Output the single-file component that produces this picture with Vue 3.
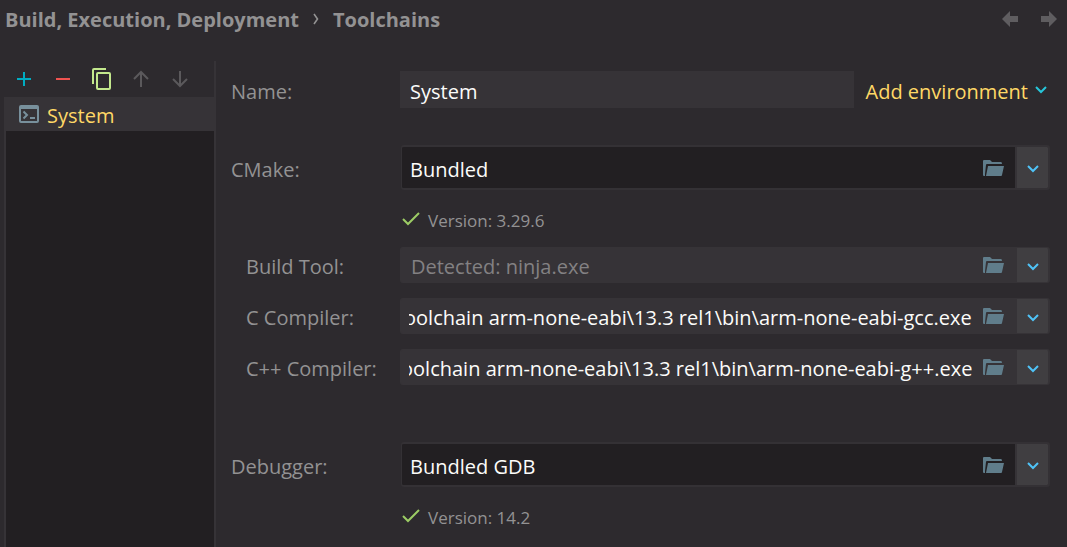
<script setup>
import { onMounted, ref } from 'vue';

const TOOLCHAIN_BIN = 'C:\\Program Files (x86)\\Arm GNU Toolchain arm-none-eabi\\13.3 rel1\\bin\\';

const name = ref('System');
const toolchains = ref(['System']);
const selected = ref('System');
const form = ref(null);

const fields = ref([
    { id: 'cmake', label: 'CMake:', value: 'Bundled', large: true, version: 'Version: 3.29.6' },
    { id: 'build-tool', label: 'Build Tool:', value: '', placeholder: 'Detected: ninja.exe', nested: true },
    { id: 'c-compiler', label: 'C Compiler:', value: TOOLCHAIN_BIN + 'arm-none-eabi-gcc.exe', nested: true },
    { id: 'cpp-compiler', label: 'C++ Compiler:', value: TOOLCHAIN_BIN + 'arm-none-eabi-g++.exe', nested: true },
    { id: 'debugger', label: 'Debugger:', value: 'Bundled GDB', large: true, version: 'Version: 14.2' },
]);

onMounted(() => {
    // keep the end of long paths visible
    form.value.querySelectorAll('.combo input').forEach((input) => {
        input.scrollLeft = input.scrollWidth;
    });
});
</script>

<template>
    <div class="settings">
        <header class="header">
            <nav class="breadcrumbs">
                <a href="#">Build, Execution, Deployment</a>
                <svg width="6" height="14" viewBox="0 0 6 14">
                    <path d="M1 1L4.500 6L1 11" fill="none" stroke="currentColor" stroke-width="1.6" />
                </svg>
                <span>Toolchains</span>
            </nav>
            <div class="history">
                <button type="button" aria-label="Back">
                    <svg width="16" height="16" viewBox="0 0 16 16">
                        <path d="M0 8L8 0V5H16V11H8V16Z" fill="currentColor" />
                    </svg>
                </button>
                <button type="button" aria-label="Forward">
                    <svg width="16" height="16" viewBox="0 0 16 16">
                        <path d="M16 8L8 0V5H0V11H8V16Z" fill="currentColor" />
                    </svg>
                </button>
            </div>
        </header>

        <div class="content">
            <aside class="sidebar">
                <div class="toolbar">
                    <button type="button" class="add" aria-label="Add">
                        <svg width="24" height="24" viewBox="0 0 24 24">
                            <path d="M5 12H19M12 5V19" fill="none" stroke="currentColor" stroke-width="2" />
                        </svg>
                    </button>
                    <button type="button" class="remove" aria-label="Remove">
                        <svg width="24" height="24" viewBox="0 0 24 24">
                            <path d="M5 12H19" fill="none" stroke="currentColor" stroke-width="2" />
                        </svg>
                    </button>
                    <button type="button" class="copy" aria-label="Copy">
                        <svg width="24" height="24" viewBox="0 0 24 24">
                            <path
                                d="M3 17V3Q3 2 4 2H16M8 6H19Q20 6 20 7V21Q20 22 19 22H8Q7 22 7 21V7Q7 6 8 6Z"
                                fill="none"
                                stroke="currentColor"
                                stroke-width="2"
                            />
                        </svg>
                    </button>
                    <button type="button" aria-label="Move up" disabled>
                        <svg width="24" height="24" viewBox="0 0 24 24">
                            <path d="M12 20V5M5 12L12 5L19 12" fill="none" stroke="currentColor" stroke-width="2" />
                        </svg>
                    </button>
                    <button type="button" aria-label="Move down" disabled>
                        <svg width="24" height="24" viewBox="0 0 24 24">
                            <path d="M12 4V19M5 12L12 19L19 12" fill="none" stroke="currentColor" stroke-width="2" />
                        </svg>
                    </button>
                </div>
                <div class="list">
                    <button
                        v-for="item in toolchains"
                        :key="item"
                        type="button"
                        class="item"
                        :class="{ active: item === selected }"
                        @click="selected = item"
                    >
                        <svg width="20" height="18" viewBox="0 0 20 18">
                            <path
                                d="M2 0H18Q20 0 20 2V16Q20 18 18 18H2Q0 18 0 16V2Q0 0 2 0ZM2 4V16H18V4Z"
                                fill="currentColor"
                                fill-rule="evenodd"
                            />
                            <path d="M4.500 6.500L8 10L4.500 13.500M11 13H16" fill="none" stroke="currentColor" stroke-width="2" />
                        </svg>
                        <span>{{ item }}</span>
                    </button>
                </div>
            </aside>

            <form ref="form" class="form" @submit.prevent>
                <div class="row name-row">
                    <label for="name">Name:</label>
                    <div class="name-field">
                        <input id="name" v-model="name" type="text" />
                        <button type="button" class="environment">
                            <span>Add environment</span>
                            <svg width="12" height="8" viewBox="0 0 12 8">
                                <path d="M1 1L6 6L11 1" fill="none" stroke="currentColor" stroke-width="2" />
                            </svg>
                        </button>
                    </div>
                </div>

                <template v-for="field in fields" :key="field.id">
                    <div class="row" :class="{ nested: field.nested, main: field.large }">
                        <label :for="field.id">{{ field.label }}</label>
                        <div class="combo" :class="{ large: field.large }">
                            <input :id="field.id" v-model="field.value" type="text" :placeholder="field.placeholder" />
                            <button type="button" class="browse" aria-label="Browse">
                                <svg width="22" height="16" viewBox="0 0 22 16">
                                    <path
                                        d="M0 1Q0 0 1 0H7L9 2H18Q19 2 19 4H4Q3 4 3 5L2 14V16H1Q0 16 0 15ZM5 6H21L19 15Q19 16 18 16H3Z"
                                        fill="currentColor"
                                    />
                                </svg>
                            </button>
                            <button type="button" class="arrow" aria-label="Show options">
                                <svg width="12" height="8" viewBox="0 0 12 8">
                                    <path d="M1 1L6 6L11 1" fill="none" stroke="currentColor" stroke-width="2" />
                                </svg>
                            </button>
                        </div>
                    </div>
                    <div v-if="field.version" class="version">
                        <svg width="18" height="14" viewBox="0 0 18 14">
                            <path d="M1 7L6 12L17 1" fill="none" stroke="currentColor" stroke-width="2" />
                        </svg>
                        <span>{{ field.version }}</span>
                    </div>
                </template>
            </form>
        </div>
    </div>
</template>

<style>
body {
    background: #2d2a2e;
}
</style>

<style scoped>
.settings {
    box-sizing: border-box;
    display: flex;
    flex-direction: column;
    min-height: 100vh;
    background: #2d2a2e;
    color: #939293;
    font-family: 'Open Sans', 'Noto Sans', sans-serif;
    font-size: 20px;
    line-height: 28px;
}
svg {
    display: block;
    flex: none;
}
button {
    display: flex;
    align-items: center;
    padding: 0;
    border: 0;
    background: none;
    color: inherit;
    font: inherit;
    cursor: pointer;
}
input {
    box-sizing: border-box;
    min-width: 0;
    padding: 4px 0 0;
    border: 0;
    outline: 0;
    background: none;
    color: #fcfcfa;
    font: inherit;
}
input::placeholder {
    color: #838183;
    opacity: 1;
}

.header {
    display: flex;
    align-items: center;
    justify-content: space-between;
    height: 38px;
    margin-bottom: 23px;
    padding: 0 10px 0 5px;
}
.breadcrumbs {
    display: flex;
    align-items: center;
    gap: 14px;
    padding-top: 2px;
    font-weight: 700;
}
.breadcrumbs a {
    color: inherit;
    text-decoration: none;
}
.history {
    display: flex;
    gap: 23px;
    color: #5f5d60;
}

.content {
    display: flex;
    flex: 1;
}
.sidebar {
    display: flex;
    flex: none;
    flex-direction: column;
    box-sizing: border-box;
    width: 212px;
    margin-left: 4px;
    border-right: 2px solid #363337;
}
.toolbar {
    display: flex;
    align-items: center;
    gap: 15px;
    height: 36px;
    padding-left: 8px;
}
.toolbar button:disabled {
    color: #5b595c;
    cursor: default;
}
.toolbar .add {
    color: #00acc1;
}
.toolbar .remove {
    color: #ef5350;
}
.toolbar .copy {
    color: #c3e88d;
}
.list {
    flex: 1;
    border-left: 2px solid #363337;
    background: #221f22;
}
.item {
    gap: 8px;
    width: 100%;
    height: 34px;
    padding-left: 13px;
}
.item span,
.environment span {
    padding-top: 4px;
}
.item.active {
    background: #363337;
    color: #ffd866;
}
.item svg {
    color: #78909c;
}

.form {
    flex: 1;
    min-width: 0;
    padding: 10px 17px 0 15px;
}
.row {
    display: grid;
    grid-template-columns: 169px minmax(0, 1fr);
    align-items: center;
}
.row label {
    padding-top: 4px;
}
.row.nested {
    margin-bottom: 15px;
}
.row.nested label {
    padding-left: 15px;
}
.row.nested + .row.main {
    margin-top: 57px;
}
.name-row {
    margin-bottom: 37px;
}
.name-field {
    display: flex;
    gap: 12px;
}
.name-field input {
    flex: 1;
    height: 37px;
    padding-left: 10px;
    background: #363337;
}
.environment {
    gap: 7px;
    padding-right: 3px;
    color: #ffd866;
}
.environment svg {
    color: #26c6da;
}

.combo {
    display: flex;
    box-sizing: border-box;
    height: 36px;
    overflow: hidden;
    border: 1px solid #363337;
    border-right-width: 2px;
    border-radius: 3px;
    background: #363337;
}
.combo input {
    flex: 1;
    margin-left: 8px;
}
.combo input::placeholder {
    text-indent: 2px;
}
.combo .browse {
    justify-content: center;
    width: 43px;
    color: #607d8b;
}
.combo .arrow {
    justify-content: center;
    width: 33px;
    padding-top: 3px;
    border-left: 2px solid #363337;
    background: #403e41;
    color: #4fc3f7;
}
.combo.large {
    height: 45px;
    margin-left: 1px;
    border-width: 2px 2px 2px 1px;
    border-color: #343135;
    background: #221f22;
}

.version {
    display: flex;
    align-items: center;
    gap: 8px;
    height: 57px;
    padding-left: 171px;
    font-size: 17px;
}
.version span {
    padding-top: 4px;
}
.version svg {
    color: #9ccc65;
}
</style>
